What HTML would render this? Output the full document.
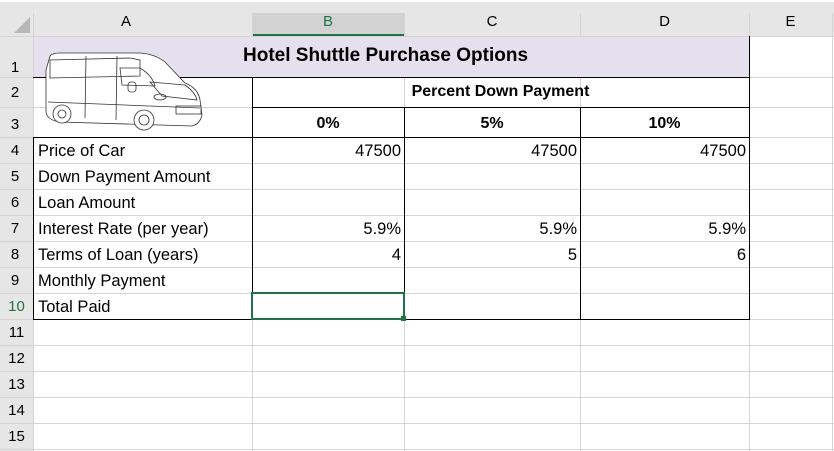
<html><head><style>
body{margin:0;width:834px;height:451px;background:#fff;font-family:"Liberation Sans",Calibri,sans-serif;overflow:hidden;position:relative}
.a{position:absolute}
.t{position:absolute;font-size:16.5px;color:#000;white-space:nowrap}
</style></head><body>
<div class="a" style="left:0;top:0;width:834px;height:36px;background:#e6e6e6"></div>
<div class="a" style="left:0;top:0;width:834px;height:2px;background:#fff"></div>
<div class="a" style="left:0;top:36px;width:33px;height:415px;background:#e6e6e6"></div>
<div class="a" style="left:252px;top:13px;width:152px;height:23px;background:#d2d2d2;border-bottom:2px solid #217346;box-sizing:border-box"></div>
<svg class="a" style="left:0;top:0" width="834" height="451">
<polygon points="14,33 30,33 30,17" fill="#b8b8b8"/>
<g stroke="#d4d4d4" stroke-width="1">
<line x1="33.5" y1="13" x2="33.5" y2="36"/><line x1="252.5" y1="13" x2="252.5" y2="451"/><line x1="404.5" y1="13" x2="404.5" y2="451"/><line x1="580.5" y1="13" x2="580.5" y2="451"/><line x1="749.5" y1="13" x2="749.5" y2="451"/><line x1="832.5" y1="13" x2="832.5" y2="451"/>
<line x1="0" y1="36.5" x2="834" y2="36.5"/>
<line x1="0" y1="77.5" x2="834" y2="77.5"/><line x1="0" y1="107.5" x2="834" y2="107.5"/><line x1="0" y1="137.5" x2="834" y2="137.5"/>
<line x1="0" y1="163.5" x2="834" y2="163.5"/><line x1="0" y1="189.5" x2="834" y2="189.5"/><line x1="0" y1="215.5" x2="834" y2="215.5"/><line x1="0" y1="241.5" x2="834" y2="241.5"/><line x1="0" y1="267.5" x2="834" y2="267.5"/><line x1="0" y1="293.5" x2="834" y2="293.5"/><line x1="0" y1="319.5" x2="834" y2="319.5"/><line x1="0" y1="345.5" x2="834" y2="345.5"/><line x1="0" y1="371.5" x2="834" y2="371.5"/><line x1="0" y1="397.5" x2="834" y2="397.5"/><line x1="0" y1="423.5" x2="834" y2="423.5"/><line x1="0" y1="449.5" x2="834" y2="449.5"/>
<line x1="33.5" y1="36" x2="33.5" y2="451"/>
</g>
<rect x="34" y="37" width="715" height="40" fill="#e4e0ee"/>
<g stroke="#000" stroke-width="1" fill="none">
<line x1="33" y1="77.5" x2="750" y2="77.5"/><line x1="33" y1="137.5" x2="750" y2="137.5"/><line x1="33" y1="319.5" x2="750" y2="319.5"/>
<line x1="252" y1="107.5" x2="750" y2="107.5"/>
<line x1="33.5" y1="137" x2="33.5" y2="320"/><line x1="252.5" y1="77" x2="252.5" y2="320"/><line x1="404.5" y1="107" x2="404.5" y2="320"/><line x1="580.5" y1="107" x2="580.5" y2="320"/><line x1="749.5" y1="36" x2="749.5" y2="320"/>
</g>
<rect x="252" y="293" width="152" height="26" fill="none" stroke="#217346" stroke-width="2"/>
<rect x="401" y="316" width="5" height="5" fill="#217346"/>
<g stroke="#333" stroke-width="0.8" fill="#fff">
<path d="M50,56 Q52,53 60,53 L140,53 Q155,54 165,62 L185,83 Q198,88 200,100 L202,115 Q200,124 192,126 L60,122 Q47,120 46,112 L46,70 Z"/>
<path d="M50,60 L130,58 L140,60 L140,76 L50,78 Z" fill="none"/>
<line x1="86" y1="56" x2="85" y2="118"/><line x1="117" y1="56" x2="116" y2="120"/>
<path d="M120,68 L140,68 Q152,75 155,86 L122,85 Z" fill="none"/>
<path d="M150,82 L185,85 Q195,92 197,100 L162,96 Z" fill="none"/>
<rect x="128" y="82" width="8" height="10" rx="3" fill="none"/>
<ellipse cx="160" cy="97" rx="6" ry="3" fill="none"/>
<path d="M48,102 L200,108" fill="none"/>
<rect x="176" y="106" width="25" height="8" fill="none"/>
<circle cx="62" cy="114" r="9"/><circle cx="62" cy="114" r="4"/>
<circle cx="144" cy="120" r="10"/><circle cx="144" cy="120" r="5"/>
</g>
</svg>
<div class="t" style="left:0;top:13px;width:252px;text-align:center;font-size:15px">A</div>
<div class="t" style="left:252px;top:13px;width:152px;text-align:center;font-size:15px;color:#217346">B</div>
<div class="t" style="left:404px;top:13px;width:176px;text-align:center;font-size:15px">C</div>
<div class="t" style="left:580px;top:13px;width:169px;text-align:center;font-size:15px">D</div>
<div class="t" style="left:749px;top:13px;width:83px;text-align:center;font-size:15px">E</div>
<div class="t" style="left:0;top:59px;width:30px;text-align:center;font-size:15px">1</div>
<div class="t" style="left:0;top:84px;width:30px;text-align:center;font-size:15px">2</div>
<div class="t" style="left:0;top:116px;width:30px;text-align:center;font-size:15px">3</div>
<div class="t" style="left:0;top:142px;width:30px;text-align:center;font-size:15px">4</div>
<div class="t" style="left:0;top:168px;width:30px;text-align:center;font-size:15px">5</div>
<div class="t" style="left:0;top:194px;width:30px;text-align:center;font-size:15px">6</div>
<div class="t" style="left:0;top:220px;width:30px;text-align:center;font-size:15px">7</div>
<div class="t" style="left:0;top:246px;width:30px;text-align:center;font-size:15px">8</div>
<div class="t" style="left:0;top:272px;width:30px;text-align:center;font-size:15px">9</div>
<div class="t" style="left:0;top:298px;width:33px;text-align:center;font-size:15px;color:#217346">10</div>
<div class="t" style="left:0;top:324px;width:33px;text-align:center;font-size:15px">11</div>
<div class="t" style="left:0;top:350px;width:33px;text-align:center;font-size:15px">12</div>
<div class="t" style="left:0;top:376px;width:33px;text-align:center;font-size:15px">13</div>
<div class="t" style="left:0;top:402px;width:33px;text-align:center;font-size:15px">14</div>
<div class="t" style="left:0;top:428px;width:33px;text-align:center;font-size:15px">15</div>
<div class="t" style="left:243px;top:45px;font-weight:bold;font-size:19px">Hotel Shuttle Purchase Options</div>
<div class="t" style="left:252px;top:83px;width:497px;text-align:center;font-weight:bold;font-size:16px">Percent Down Payment</div>
<div class="t" style="left:252px;top:115px;width:152px;text-align:center;font-weight:bold;font-size:16px">0%</div>
<div class="t" style="left:404px;top:115px;width:176px;text-align:center;font-weight:bold;font-size:16px">5%</div>
<div class="t" style="left:580px;top:115px;width:169px;text-align:center;font-weight:bold;font-size:16px">10%</div>
<div class="t" style="left:38px;top:142px">Price of Car</div>
<div class="t" style="left:38px;top:168px">Down Payment Amount</div>
<div class="t" style="left:38px;top:194px">Loan Amount</div>
<div class="t" style="left:38px;top:220px">Interest Rate (per year)</div>
<div class="t" style="left:38px;top:246px">Terms of Loan (years)</div>
<div class="t" style="left:38px;top:272px">Monthly Payment</div>
<div class="t" style="left:38px;top:298px">Total Paid</div>
<div class="t" style="left:252px;top:142px;width:149px;text-align:right">47500</div>
<div class="t" style="left:404px;top:142px;width:173px;text-align:right">47500</div>
<div class="t" style="left:580px;top:142px;width:166px;text-align:right">47500</div>
<div class="t" style="left:252px;top:220px;width:149px;text-align:right">5.9%</div>
<div class="t" style="left:404px;top:220px;width:173px;text-align:right">5.9%</div>
<div class="t" style="left:580px;top:220px;width:166px;text-align:right">5.9%</div>
<div class="t" style="left:252px;top:246px;width:149px;text-align:right">4</div>
<div class="t" style="left:404px;top:246px;width:173px;text-align:right">5</div>
<div class="t" style="left:580px;top:246px;width:166px;text-align:right">6</div>
</body></html>
